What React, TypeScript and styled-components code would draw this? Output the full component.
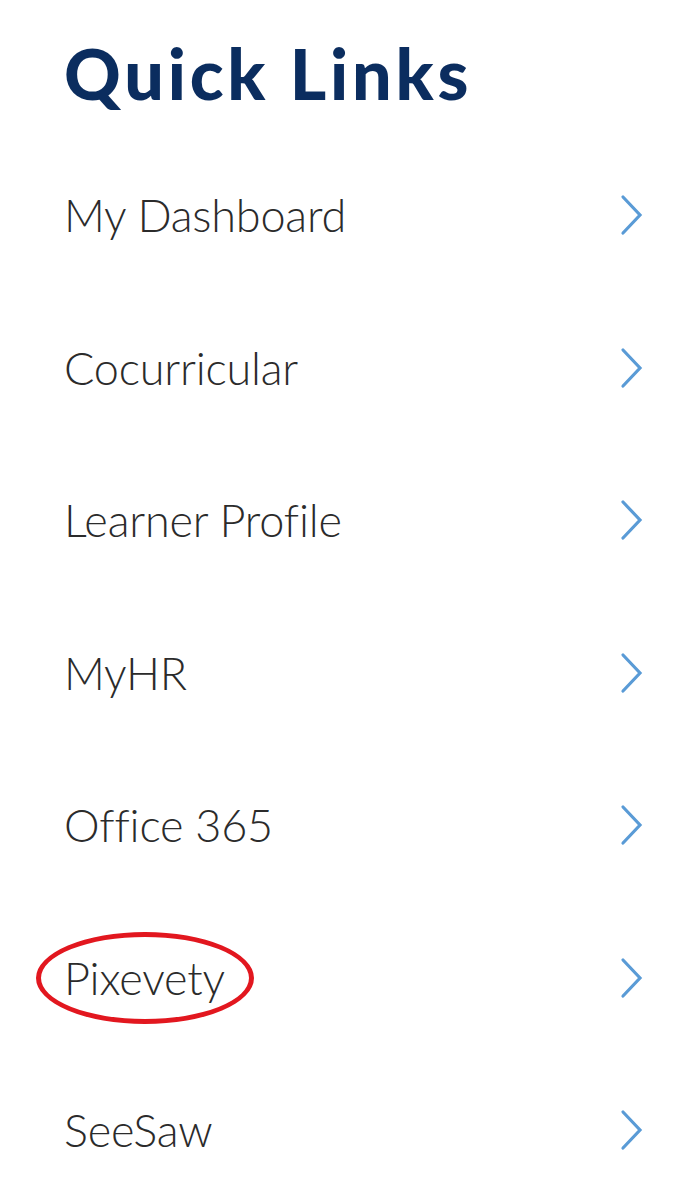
import styled, { createGlobalStyle } from "styled-components"

const GlobalStyle = createGlobalStyle`
  html, body {
    margin: 0;
    padding: 0;
    background: #ffffff;
  }
`

const Panel = styled.section`
  width: 693px;
  padding: 38px 48px 0 64px;
  box-sizing: border-box;
  font-family: "Lato", "Liberation Sans", sans-serif;
`

const Heading = styled.h2`
  margin: 0;
  height: 101px;
  font-size: 70px;
  line-height: 70px;
  font-weight: 900;
  color: #0b2d5f;
  letter-spacing: 3.8px;
`

const LinkList = styled.ul`
  list-style: none;
  margin: 0;
  padding: 0;
`

const LinkRow = styled.li`
  position: relative;
  height: 152.5px;
  display: flex;
  align-items: center;
  justify-content: space-between;
`

const LinkLabel = styled.span`
  font-size: 45px;
  font-weight: 300;
  color: #2b2b2b;
  letter-spacing: -0.2px;
`

const Circled = styled.span`
  position: absolute;
  left: -28px;
  top: 50%;
  width: 218px;
  height: 92px;
  transform: translateY(-50%);
  border: 5px solid #e2171f;
  border-radius: 50%;
  box-sizing: border-box;
`

const Chevron = () => (
  <svg width="26" height="42" viewBox="0 0 26 42" fill="none">
    <path d="M4 3 L21 21 L4 39" stroke="#5a9bd6" strokeWidth="3.2" strokeLinecap="round" strokeLinejoin="miter" />
  </svg>
)

const links = [
  { label: "My Dashboard" },
  { label: "Cocurricular" },
  { label: "Learner Profile" },
  { label: "MyHR" },
  { label: "Office 365" },
  { label: "Pixevety", circled: true },
  { label: "SeeSaw" },
]

export default function App() {
  return (
    <>
      <GlobalStyle />
      <Panel>
        <Heading>Quick Links</Heading>
        <LinkList>
          {links.map((link) => (
            <LinkRow key={link.label}>
              <LinkLabel>{link.label}</LinkLabel>
              {link.circled && <Circled />}
              <Chevron />
            </LinkRow>
          ))}
        </LinkList>
      </Panel>
    </>
  )
}
